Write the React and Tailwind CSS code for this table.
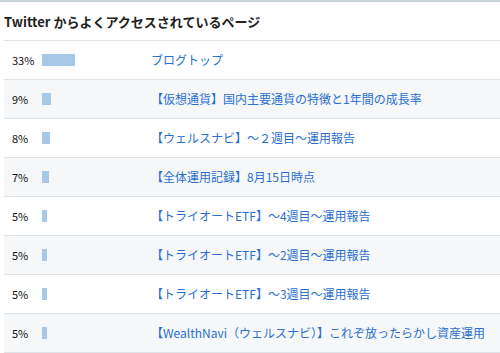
import React from "react";

const rows = [
  { p: 33, t: "ブログトップ" },
  { p: 9, t: "【仮想通貨】国内主要通貨の特徴と1年間の成長率" },
  { p: 8, t: "【ウェルスナビ】～２週目～運用報告" },
  { p: 7, t: "【全体運用記録】8月15日時点" },
  { p: 5, t: "【トライオートETF】～4週目～運用報告" },
  { p: 5, t: "【トライオートETF】～2週目～運用報告" },
  { p: 5, t: "【トライオートETF】～3週目～運用報告" },
  { p: 5, t: "【WealthNavi（ウェルスナビ）】これぞ放ったらかし資産運用" },
];

export default function App() {
  return (
    <div
      className="w-[500px] h-[353px] bg-white overflow-hidden border-t-2 border-[#c9d3d8]"
      style={{ fontFamily: '"Noto Sans CJK JP", "Noto Sans", sans-serif' }}
    >
      <div className="pl-1">
        <div className="h-[38px] flex items-center pt-[1px] text-[13px] font-bold text-[#222]">
          Twitter からよくアクセスされているページ
        </div>
        <div className="border-t border-[#dde3e6]">
          {rows.map((r, i) => (
            <div
              key={i}
              className={`h-[39px] flex items-center border-b border-[#dde3e6] ${
                i % 2 === 1 ? "bg-[#f5f7f9]" : "bg-white"
              }`}
            >
              <div className="w-[38px] pl-2 text-[11px] text-[#111]">{r.p}%</div>
              <div className="w-[109px] flex items-center">
                <div className="h-3 bg-[#a8c8e8]" style={{ width: r.p + "px" }} />
              </div>
              <div className="text-[12px] text-[#2a6fd0] whitespace-nowrap">{r.t}</div>
            </div>
          ))}
        </div>
      </div>
    </div>
  );
}
